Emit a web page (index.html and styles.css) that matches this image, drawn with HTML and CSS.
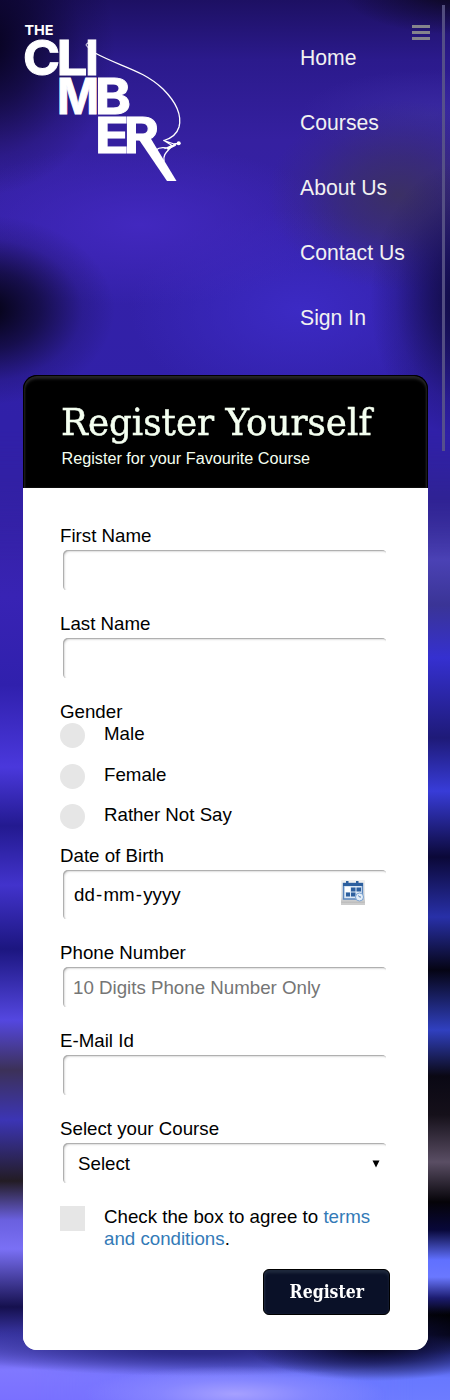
FILE: index.html
```html
<!DOCTYPE html>
<html lang="en">
<head>
<meta charset="utf-8">
<title>The Climber - Register</title>
<link rel="stylesheet" href="styles.css">
</head>
<body>
<div class="page">
  <div class="backdrop-left"></div>
  <div class="backdrop-top"></div>
  <div class="backdrop-bottom"></div>
  <header class="header">
    <svg class="logo" viewBox="0 0 160 160" role="img" aria-label="The Climber">
      <clipPath id="r-bowl"><path d="M95 88h45v28.500h-29V132H95z"/></clipPath>
      <g class="logo-text" fill="#fff">
        <text x="-0.5" y="10" font-size="13.4" textLength="29" lengthAdjust="spacingAndGlyphs">THE</text>
        <text class="heavy" x="-2" y="50.2" font-size="48.5" textLength="37" lengthAdjust="spacingAndGlyphs">C</text>
        <text class="heavy" x="31.5" y="50.2" font-size="48.5" textLength="31" lengthAdjust="spacingAndGlyphs">L</text>
        <text class="heavy" x="60" y="50.2" font-size="48.5" textLength="14" lengthAdjust="spacingAndGlyphs">I</text>
        <text class="heavy" x="32" y="89.3" font-size="49" textLength="42" lengthAdjust="spacingAndGlyphs">M</text>
        <text class="heavy" x="70" y="89.3" font-size="49" textLength="36" lengthAdjust="spacingAndGlyphs">B</text>
        <text class="heavy" x="70" y="128" font-size="49" textLength="34" lengthAdjust="spacingAndGlyphs">E</text>
        <g clip-path="url(#r-bowl)"><text class="heavy" x="99" y="128" font-size="49" textLength="35" lengthAdjust="spacingAndGlyphs">R</text></g>
      </g>
      <path fill="#fff" d="M113.500 114l12-1 26 43h-9.500z"/>
      <g fill="none" stroke="#fff" stroke-linecap="round" stroke-linejoin="round">
        <path stroke-width="1" d="M64 22.500c-3 0-4-4-1-4.500c2 0 3 2 2 4"/>
        <path stroke-width="1.3" d="M70 28C96 42 118 45 138 64C151 77 157 90 154 102C152 109 147 113 139 115.500"/>
        <path stroke-width="1.3" d="M139 115.500l10 3.500 4-.5M139 115.500l8 5-7 3M149 120l-7 3c-5-1-9 0-11 2M146 122c-4 5-8 7-7 14"/>
        <path stroke-width="2.2" d="M150 120l-7 3.500"/>
      </g>
      <circle cx="153.700" cy="118.300" r="2" fill="#fff"/>
    </svg>
    <nav class="nav">
      <a>Home</a><a>Courses</a><a>About Us</a><a>Contact Us</a><a>Sign In</a>
    </nav>
    <div class="menu"><i></i><i></i><i></i></div>
  </header>
  <div class="scrollbar"></div>
  <main class="card">
    <div class="card-head">
      <h1>Register Yourself</h1>
      <p>Register for your Favourite Course</p>
    </div>
    <form class="form">
      <div class="field"><label>First Name</label><div class="box"></div></div>
      <div class="field"><label>Last Name</label><div class="box"></div></div>
      <div class="gender">
        <label>Gender</label>
        <div class="option"><span class="radio"></span><span>Male</span></div>
        <div class="option"><span class="radio"></span><span>Female</span></div>
        <div class="option"><span class="radio"></span><span>Rather Not Say</span></div>
      </div>
      <div class="field"><label>Date of Birth</label>
        <div class="box date"><span><b>dd</b><b>-</b><b>mm</b><b>-</b><b>yyyy</b></span>
          <svg class="calendar" viewBox="0 0 26 28">
            <defs>
              <linearGradient id="tile" x1="0" y1="0" x2="0" y2="1"><stop offset="0" stop-color="#f0f0f0"/><stop offset=".75" stop-color="#e2e2e2"/><stop offset="1" stop-color="#bbb"/></linearGradient>
              <filter id="soft" x="-20%" y="-20%" width="140%" height="150%"><feGaussianBlur stdDeviation=".7"/></filter>
            </defs>
            <rect x="1" y="2" width="24" height="24" fill="#ccc" filter="url(#soft)"/>
            <rect x="1" y="1" width="24" height="23" rx="1" fill="url(#tile)"/>
            <rect x="3.5" y="4.500" width="19" height="15.500" fill="#dce8f5" stroke="#5b86bd" stroke-width="1.500"/>
            <path fill="#2d5f9e" d="M3 4h20v3H3zM6 2h2.500v4H6zM16 2h2.500v4H16zM11 8.500h4.500v4H11zM16.500 8.500H21v4h-4.500zM6 13.500h4v4H6zM11 13.500h4.500v4H11z"/>
            <path fill="#fff" d="M5 8h5v5H5z"/>
            <circle cx="19.500" cy="18" r="4" fill="#e4eef8" stroke="#7ba3d2"/>
            <path d="M18.500 16.500l1 1.500h1.500" fill="none" stroke="#4d7ab4"/>
          </svg>
        </div></div>
      <div class="field"><label>Phone Number</label><div class="box hint">10 Digits Phone Number Only</div></div>
      <div class="field"><label>E-Mail Id</label><div class="box"></div></div>
      <div class="field"><label>Select your Course</label>
        <div class="box select"><span>Select</span><svg width="8" height="8" viewBox="0 0 8 8"><path d="M.5.5h7L4 7.500z"/></svg></div></div>
      <div class="agree"><span class="check"></span><p>Check the box to agree to <a>terms and conditions</a>.</p></div>
      <button type="button" class="submit"><span>Register</span></button>
    </form>
  </main>
</div>
</body>
</html>
```
FILE: styles.css
```css
* { box-sizing: border-box; }
body { margin: 0; font: 18.72px/22px "Liberation Sans", Arial, sans-serif; color: #000; }
h1, p { margin: 0; font-weight: normal; }
.page {
  position: relative; height: 1400px; overflow: hidden; isolation: isolate;
  background: linear-gradient(#20146c 0, #2e2094 100px, #3424b0 330px, #2d239c 360px, #2f2583 499px, #4b42b5 559px, #3a3496 605px, #3530d0 658px, #1e1a78 738px, #383cd8 791px, #0b0838 857px, #2830a8 917px, #050414 970px, #3040c0 1030px, #0a0814 1076px, #15101a 1115px, #5a4e64 1162px, #050308 1202px, #08083a 1230px, #6070ff 1260px, #6a78ff 1277px, #1c1c70 1298px, #000 1315px, #000 1335px, #3a43b5 1355px, #6878ff 1378px, #6d7cff 1400px);
}
.backdrop-left, .backdrop-top, .backdrop-bottom { position: absolute; inset: 0; z-index: -1; }
.backdrop-left {
  background: linear-gradient(#34219f 480px, #3823b4 597px, #3020ad 685px, #4a38dc 767px, #231a90 826px, #4233cc 885px, #1c1680 949px, #5447e0 1020px, #3c3158 1070px, #3c35b5 1120px, #231c24 1181px, #6a60df 1220px, #7a70f5 1249px, #15104e 1307px, #3a36a5 1335px, #8078ff 1370px, #7a70ff 1400px);
  mask-image: linear-gradient(90deg, #000 6%, transparent 92%);
}
.backdrop-top {
  height: 560px; bottom: auto;
  background:
    radial-gradient(ellipse 120px 45px at 460px -10px, #090614 0, #09061470 50%, #09061400 100%),
    radial-gradient(ellipse 130px 150px at -15px 45px, #06021c 0, #07031ea0 40%, #07031e30 75%, #07031e00 100%),
    radial-gradient(ellipse 130px 95px at -15px 310px, #050316 5%, #060418a0 42%, #06041828 75%, #06041800 100%),
    radial-gradient(ellipse 100px 140px at 470px 300px, #0d093a 5%, #0d093aa0 40%, #0d093a30 75%, #0d093a00 100%),
    radial-gradient(ellipse 130px 95px at 398px 195px, #3b3064 0, #3b3064a0 40%, #3b306430 75%, #3b306400 100%),
    radial-gradient(ellipse 130px 45px at 430px 115px, #3929a0 0, #3929a000 100%),
    radial-gradient(ellipse 200px 80px at 140px 225px, #4228bf 0, #4228bf00 100%),
    radial-gradient(ellipse 170px 100px at 300px 310px, #3c2ac4 0, #3c2ac400 100%),
    linear-gradient(#1d1063 0, #2b1a8c 60px, #3520a0 140px, #3421a8 250px, #3020a8 420px, #3020a8 460px);
  mask-image: linear-gradient(#000 430px, transparent);
}
.backdrop-bottom {
  background:
    radial-gradient(ellipse 150px 28px at 235px 1394px, #a6a0ff 0, #9895ff80 50%, #9895ff00 100%),
    radial-gradient(ellipse 130px 38px at 375px 1343px, #05051a 10%, #0c0c36c0 45%, #14144000 100%),
    radial-gradient(ellipse 260px 28px at 200px 1348px, #2c2a88 20%, #2c2a8880 60%, #2c2a8800 100%);
}
.header { position: relative; height: 375px; padding: 25px 20px 0 25px; display: flex; }
.logo { width: 160px; height: 160px; flex: none; overflow: visible; }
.logo-text { font-family: Inter, "Open Sans", sans-serif; font-weight: 700; }
.heavy { stroke: #fff; stroke-width: 1; }
.nav { margin: 21px 0 0 115px; display: flex; flex-direction: column; gap: 41px; }
.nav a { color: #f1f1f1; font-size: 21.2px; line-height: 24px; white-space: nowrap; }
.menu { position: absolute; left: 412px; top: 25px; width: 18px; display: grid; gap: 3px; }
.menu i { height: 3px; background: #85848c; }
.scrollbar { position: absolute; left: 442px; top: 5px; width: 3px; height: 446px; background: #5c5888; opacity: .85; }
.card { width: 405px; height: 975px; margin-left: 23px; border-radius: 14px; overflow: hidden; background: linear-gradient(#000 60px, #fff 60px); }
.card-head { height: 113px; padding: 26px 0 0 37.500px; background: #000; color: #f4fff0; border: 1px solid #000; border-bottom: 0; border-radius: 14px 14px 0 0; box-shadow: inset 0 3px 3px #262626, inset 1px 0 2px #1c1c1c, inset -1px 0 2px #1c1c1c; }
.card-head h1 { font: 37px/42px "DejaVu Serif", serif; white-space: nowrap; width: max-content; margin-left: -1px; -webkit-text-stroke: .5px #f4fff0; transform: scaleX(.965); transform-origin: left; }
.card-head p { font-size: 16.22px; line-height: 20px; margin-top: 4px; }
.form { padding: 37px 38px 0 37px; display: flex; flex-direction: column; background: #fff; height: 862px; }
.field { margin-bottom: 22px; }
label { display: block; height: 22px; }
.box { margin: 3px 3px 0 3px; height: 41px; border-radius: 5px; box-shadow: inset 1px 1px 1px #aaa, inset 2px 2px 2px #e4e4e4; display: flex; align-items: center; justify-content: space-between; clip-path: inset(0 1px 1px 0); }
.option { display: flex; height: 41px; gap: 19px; }
.radio { width: 25px; height: 25px; border-radius: 50%; background: #e6e6e6; }
.gender { height: 144px; }
.option:last-child { margin-top: -1px; }
.date { height: 50px; padding: 0 21px 0 11px; }
.date b { font-weight: normal; margin-right: 1.2px; }
.calendar { width: 26px; height: 28px; margin-top: -4px; }
.hint { color: #757575; padding-left: 10px; }
.select { padding: 0 7px 0 15px; }
.agree { display: flex; gap: 19px; }
.check { width: 25px; height: 25px; flex: none; background: #e6e6e6; }
.agree p { margin-right: -4px; }
.agree a { color: #337ab7; }
.submit { align-self: flex-end; margin-top: 19px; width: 127px; height: 46px; padding: 0; border: 1px solid #000; border-radius: 6px; background: #0a1128; color: #fff; box-shadow: inset 0 3px 3px #1f293d, inset 1px 0 2px #1e2940; font: bold 18.5px/40px "DejaVu Serif", serif; }
.submit span { display: inline-block; transform: scaleX(.85); transform-origin: center; }
```
